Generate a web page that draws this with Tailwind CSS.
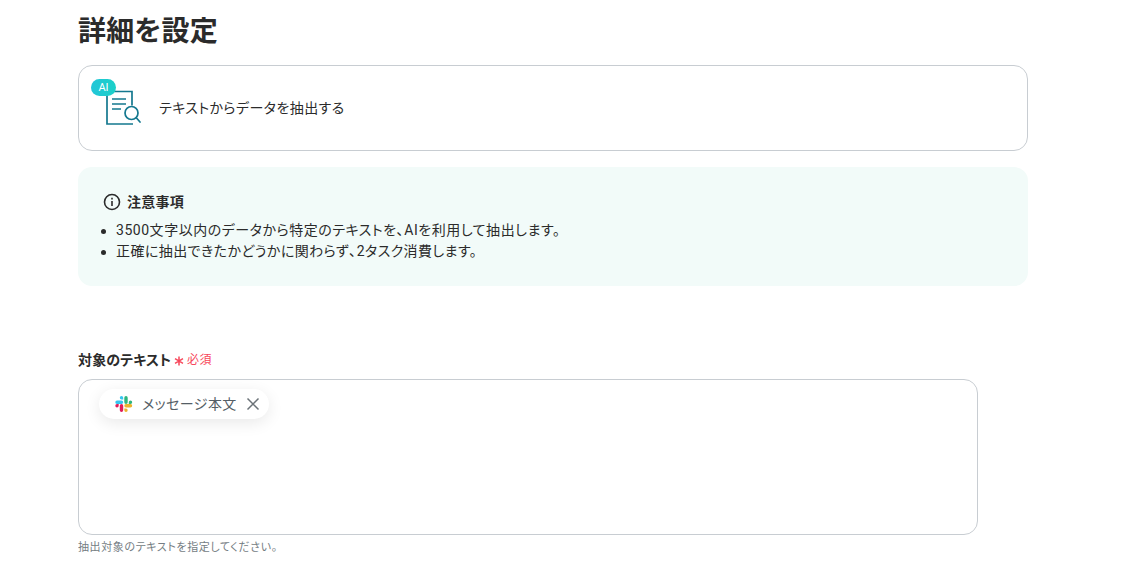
<!DOCTYPE html>
<html lang="ja">
<head>
  <meta charset="UTF-8">
  <title>詳細を設定</title>
  <script src="https://cdn.jsdelivr.net/npm/@tailwindcss/browser@4"></script>
</head>
<body class="bg-white overflow-hidden font-['Roboto','Noto_Sans_CJK_JP',sans-serif] [font-feature-settings:'palt'] text-[#283237]">
  <div class="w-[950px] ml-[78px] h-[572px] overflow-hidden">
    <h1 class="mt-[13px] h-[38px] text-[28px] leading-[38px] font-bold tracking-[0.2px] text-[#2b2b2b]">詳細を設定</h1>

    <!-- Action card -->
    <div class="mt-[14px] h-[86px] flex border border-[#c8cdd2] rounded-[14px] bg-white">
      <div class="relative ml-[12px] mt-[13px] w-[52px] h-[50px] shrink-0">
        <svg class="absolute left-[15px] top-[11px]" width="36" height="36" viewBox="0 0 36 36" fill="none" stroke="#14788f" stroke-width="1.700">
          <path d="M1 1.500h25v14" />
          <path d="M1 1.500V34h26" />
          <path d="M6 9h14M6 14h14M6 19h9" />
          <circle cx="25.500" cy="23" r="6.500" fill="#fff" />
          <path d="M30.500 28l3.500 4" stroke-linecap="round" />
        </svg>
        <div class="absolute left-0 top-0 w-[25px] h-[17px] rounded-full bg-gradient-to-r from-[#22c6d8] to-[#1cd0c8] text-white text-[11px] leading-[17px] text-center">AI</div>
      </div>
      <span class="ml-[16px] self-center text-[14px] tracking-[0.03em] text-[#2b2b2b]">テキストからデータを抽出する</span>
    </div>

    <!-- Notice -->
    <div class="mt-[16px] h-[119px] rounded-[14px] bg-[#f2fbf9] pl-[25px] pt-[25px]">
      <div class="flex items-center gap-[6px] h-[20px]">
        <svg width="18" height="18" viewBox="0 0 18 18" fill="none" stroke="#2b2b2b" stroke-width="1.600">
          <circle cx="9" cy="9" r="7.500" />
          <path d="M9 8v5" />
          <path d="M9 4.800v1.600" />
        </svg>
        <span class="text-[14px] font-bold tracking-[0.02em] text-[#2b2b2b]">注意事項</span>
      </div>
      <ul class="mt-[8px] pl-[13px] text-[14px] leading-[21px] tracking-[0.03em] text-[#2b2b2b]">
        <li class="relative tracking-[0.038em] before:absolute before:left-[-15px] before:top-[9px] before:w-[5px] before:h-[5px] before:rounded-full before:bg-[#2b2b2b]">3500文字以内のデータから特定のテキストを､AIを利用して抽出します。</li>
        <li class="relative before:absolute before:left-[-15px] before:top-[9px] before:w-[5px] before:h-[5px] before:rounded-full before:bg-[#2b2b2b]">正確に抽出できたかどうかに関わらず､2タスク消費します。</li>
      </ul>
    </div>

    <!-- Field -->
    <div class="mt-[64px] h-[20px] flex items-center">
      <span class="text-[14px] font-bold tracking-[0.01em] text-[#2b2b2b]">対象のテキスト</span>
      <svg class="ml-[3px] mt-[2px]" width="10" height="10" viewBox="0 0 10 10" fill="none" stroke="#f7485c" stroke-width="1.500">
        <path d="M5 0.500v9M1 2.700l8 4.600M9 2.700l-8 4.600" />
      </svg>
      <span class="ml-[3px] text-[12px] tracking-[0.03em] text-[#f7485c]">必須</span>
    </div>
    <div class="mt-[9px] w-[900px] h-[156px] border border-[#c8cdd2] rounded-[14px] pl-[20px] pt-[9px]">
      <div class="inline-flex items-center h-[30px] pl-[16px] pr-[9px] rounded-full bg-white shadow-[0_4px_16px_rgba(0,0,0,0.09)]">
        <svg width="18" height="18" viewBox="0 0 18 18">
          <path fill="#36c5f0" d="M6.500 1a1.700 1.700 0 0 0 0 3.400h1.700V2.700A1.700 1.700 0 0 0 6.500 1zM6.500 5.500H2a1.700 1.700 0 0 0 0 3.400h4.500a1.700 1.700 0 0 0 0-3.400z"/>
          <path fill="#2eb67d" d="M17.200 7.200a1.700 1.700 0 0 0-3.400 0v1.700h1.700a1.700 1.700 0 0 0 1.700-1.700zM12.700 7.200V2.700a1.700 1.700 0 0 0-3.400 0v4.500a1.700 1.700 0 0 0 3.400 0z"/>
          <path fill="#ecb22e" d="M11 17a1.700 1.700 0 0 0 0-3.400H9.300v1.700A1.700 1.700 0 0 0 11 17zM11 12.500h4.500a1.700 1.700 0 0 0 0-3.400H11a1.700 1.700 0 0 0 0 3.400z"/>
          <path fill="#e01e5a" d="M0.300 10.800a1.700 1.700 0 0 0 3.400 0V9.100H2a1.700 1.700 0 0 0-1.700 1.700zM4.800 10.800v4.500a1.700 1.700 0 0 0 3.400 0v-4.500a1.700 1.700 0 0 0-3.400 0z"/>
        </svg>
        <span class="ml-[9px] text-[14px] tracking-[0.03em] text-[#555e66]">メッセージ本文</span>
        <svg class="ml-[9px]" width="14" height="14" viewBox="0 0 14 14" fill="none" stroke="#6b7278" stroke-width="1.500">
          <path d="M1.500 1.500l11 11M12.500 1.500l-11 11" />
        </svg>
      </div>
    </div>
    <p class="mt-[5px] text-[11px] leading-[16px] tracking-[0.055em] text-[#757d83]">抽出対象のテキストを指定してください。</p>
  </div>
</body>
</html>
